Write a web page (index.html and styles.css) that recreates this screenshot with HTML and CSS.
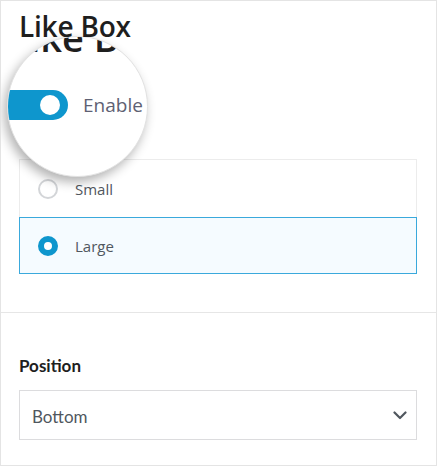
FILE: index.html
```html
<!DOCTYPE html>
<html lang="en">
<head>
<meta charset="utf-8">
<title>Like Box</title>
<link rel="stylesheet" href="styles.css">
</head>
<body>
<div class="panel">
  <section class="section section-top">
    <h2 class="title">Like Box</h2>
    <div class="toggle-row">
      <span class="toggle"><span class="knob"></span></span>
      <span class="toggle-label">Enable</span>
    </div>
    <div class="options">
      <label class="option">
        <span class="radio"></span>
        <span class="option-text">Small</span>
      </label>
      <label class="option option-selected">
        <span class="radio radio-checked"></span>
        <span class="option-text">Large</span>
      </label>
    </div>

    <div class="magnifier">
      <div class="mag-title">Like Box</div>
      <span class="mag-toggle"><span class="mag-knob"></span></span>
      <span class="mag-label">Enable</span>
    </div>
  </section>

  <section class="section section-bottom">
    <div class="field-label">Position</div>
    <div class="select">
      <span class="select-value">Bottom</span>
      <svg class="chevron" width="14" height="9" viewBox="0 0 14 9"><path d="M1.5 1.5 L7 7 L12.5 1.5" fill="none" stroke="#50575e" stroke-width="2.2" stroke-linecap="round" stroke-linejoin="round"/></svg>
    </div>
  </section>
</div>
</body>
</html>
```

FILE: styles.css
```css
* { box-sizing: border-box; }
html, body { margin: 0; padding: 0; background: #fff; }
body { font-family: "Open Sans", "Noto Sans", sans-serif; }

.panel {
  position: relative;
  width: 437px;
  height: 466px;
  border: 1px solid #e4e4e4;
  background: #fff;
  overflow: hidden;
}

.section-top {
  position: relative;
  padding: 8px 19px 38px 18px;
  border-bottom: 1px solid #e6e6e6;
}

.title {
  position: relative;
  z-index: 3;
  margin: 0;
  font-size: 28px;
  line-height: 34px;
  font-weight: 600;
  color: #1e1e1e;
  letter-spacing: -0.2px;
}

/* real-size toggle row, covered by the magnifier lens */
.toggle-row {
  display: flex;
  align-items: center;
  gap: 10px;
  height: 36px;
  margin: 36px 0 44px;
  visibility: hidden;
}
.toggle {
  position: relative;
  width: 36px;
  height: 18px;
  border-radius: 9px;
  background: #0e96cd;
}
.knob {
  position: absolute;
  right: 4px;
  top: 3px;
  width: 12px;
  height: 12px;
  border-radius: 50%;
  background: #fff;
}
.toggle-label { font-size: 13px; color: #50575e; }

.options {
  display: flex;
  flex-direction: column;
}
.option {
  display: flex;
  align-items: center;
  gap: 17px;
  padding-left: 18px;
  border: 1px solid #ececec;
  border-bottom: none;
  height: 58px;
}
.option-selected {
  height: 57px;
  border: 1px solid #3aa9dc;
  background: #f5fbff;
}
.radio {
  width: 20px;
  height: 20px;
  border-radius: 50%;
  border: 2px solid #d3d5d8;
  background: #fff;
  flex: none;
}
.radio-checked {
  border: 6.5px solid #0e96cd;
  background: #fff;
}
.option-text {
  font-size: 15px;
  color: #50575e;
}

/* magnifier lens overlay */
.magnifier {
  position: absolute;
  z-index: 2;
  left: 6px;
  top: 35px;
  width: 141px;
  height: 141px;
  border-radius: 50%;
  background: #fff;
  border: 1px solid #e2e2e2;
  box-shadow: -3px 5px 11px rgba(0, 0, 0, 0.3);
  overflow: hidden;
}
.mag-title {
  position: absolute;
  left: 1px;
  top: -19px;
  font-size: 38px;
  line-height: 38px;
  font-weight: 600;
  color: #1e1e1e;
  white-space: nowrap;
}
.mag-toggle {
  position: absolute;
  left: -13px;
  top: 53px;
  width: 73px;
  height: 30px;
  border-radius: 15px;
  background: #0e96cd;
}
.mag-knob {
  position: absolute;
  right: 8px;
  top: 5px;
  width: 20px;
  height: 20px;
  border-radius: 50%;
  background: #fff;
}
.mag-label {
  position: absolute;
  left: 75px;
  top: 59px;
  font-size: 19px;
  line-height: 19px;
  color: #5e6173;
  white-space: nowrap;
}

.section-bottom {
  padding: 43px 19px 0 18px;
}
.field-label {
  font-family: "Lato", "Open Sans", sans-serif;
  font-weight: 700;
  font-size: 17px;
  line-height: 20px;
  color: #1e1e1e;
  margin-bottom: 14px;
}
.select {
  display: flex;
  align-items: center;
  justify-content: space-between;
  height: 50px;
  border: 1px solid #dcdcde;
  padding: 3px 9px 0 12px;
}
.select-value {
  font-family: "Lato", "Open Sans", sans-serif;
  font-size: 17px;
  line-height: 20px;
  color: #50575e;
}
.chevron { margin-top: -2px; }
```
